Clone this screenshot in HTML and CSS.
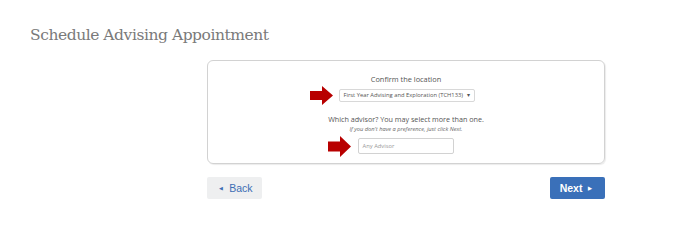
FILE: index.html
```html
<!DOCTYPE html>
<html>
<head>
<meta charset="utf-8">
<link rel="stylesheet" href="styles.css">
</head>
<body>
<div class="page">
  <h1 class="title">Schedule Advising Appointment</h1>
  <div class="panel">
    <div class="card">
      <div class="label">Confirm the location</div>
      <div class="row">
        <svg class="arrow" width="23" height="19" viewBox="0 0 23 19"><path d="M0 5H12V0L23 9.5L12 19V14H0Z" fill="#b80000"/></svg>
        <div class="select">First Year Advising and Exploration (TCH133) <span class="caret">&#9662;</span></div>
      </div>
      <div class="label q">Which advisor? You may select more than one.</div>
      <div class="hint">If you don't have a preference, just click Next.</div>
      <div class="row row2">
        <svg class="arrow" width="23" height="21" viewBox="0 0 23 21"><path d="M0 5.5H12V0L23 10.5L12 21V15.5H0Z" fill="#b80000"/></svg>
        <div class="input">Any Advisor</div>
      </div>
    </div>
    <div class="buttons">
      <div class="btn back"><span class="tri">&#9664;</span> Back</div>
      <div class="btn next">Next <span class="tri">&#9654;</span></div>
    </div>
  </div>
</div>
</body>
</html>
```
FILE: styles.css
```css
* { box-sizing: border-box; }
body { margin: 0; background: #fff; }
.page { width: 700px; height: 250px; }
.title {
  margin: 0;
  padding: 24px 0 0 30px;
  font-family: "DejaVu Serif", serif;
  font-weight: normal;
  font-size: 15.5px;
  line-height: 22px;
  color: #7a7a7a;
  letter-spacing: -0.45px;
}
.panel { margin: 14px 0 0 207px; width: 398px; }
.card {
  border: 1px solid #d2d2d2;
  border-radius: 6px;
  box-shadow: 1px 1px 1px rgba(0,0,0,0.08);
  height: 104px;
  padding-top: 12px;
  font-family: "Open Sans", sans-serif;
  color: #555;
  text-align: center;
}
.label { font-size: 7.4px; line-height: 12px; }
.row { display: flex; justify-content: center; align-items: center; margin-top: 4px; position: relative; }
.arrow { position: absolute; }
.row .arrow { left: 102px; }
.row2 .arrow { left: 120px; top: -2px; }
.select {
  height: 13px;
  border: 1px solid #d8d8d8;
  border-radius: 2px;
  font-size: 5.8px;
  line-height: 11px;
  padding: 0 4px;
  color: #555;
  margin-left: 1px;
}
.caret { font-size: 6px; margin-left: 2px; }
.q { margin-top: 11px; font-size: 7.2px; }
.hint { font-size: 5.7px; font-style: italic; line-height: 9px; color: #666; }
.row2 { margin-top: 4px; }
.input {
  width: 96px;
  height: 16px;
  border: 1px solid #d2d2d2;
  border-radius: 2px;
  font-size: 5.8px;
  line-height: 14px;
  text-align: left;
  padding-left: 4px;
  color: #999;
  margin-left: -1px;
}
.buttons { display: flex; justify-content: space-between; margin-top: 13px; }
.btn {
  height: 22px;
  font-family: "Liberation Sans", sans-serif;
  font-size: 10.5px;
  line-height: 22px;
  border-radius: 2px;
  text-align: center;
}
.back { width: 55px; background: #eeeff0; color: #3c6eb4; }
.next { width: 55px; background: #3a70b9; color: #fff; font-weight: bold; }
.tri { font-size: 5px; vertical-align: 2px; margin: 0 3px; }
```
